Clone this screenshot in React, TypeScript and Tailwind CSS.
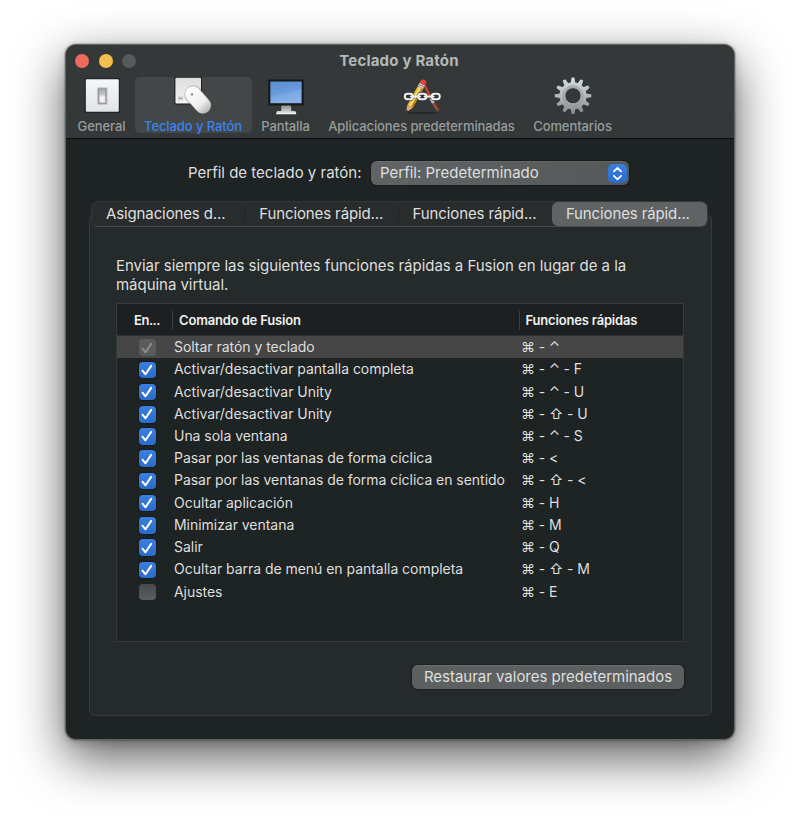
import type { ReactNode } from "react";

function GeneralIcon() {
  return (
    <svg width="40" height="40" viewBox="0 0 40 40">
      <defs>
        <linearGradient id="plate" x1="0" y1="0" x2="0" y2="1">
          <stop offset="0" stopColor="#f6f7f9" />
          <stop offset="1" stopColor="#e2e3e8" />
        </linearGradient>
        <linearGradient id="toggle" x1="0" y1="0" x2="0" y2="1">
          <stop offset="0" stopColor="#a9abb0" />
          <stop offset="0.4" stopColor="#c4c6ca" />
          <stop offset="0.6" stopColor="#f4f4f6" />
          <stop offset="1" stopColor="#e6e7ea" />
        </linearGradient>
      </defs>
      <rect x="2.8" y="1.2" width="34.8" height="34.6" rx="1" fill="#17191a" />
      <rect x="3.8" y="2.3" width="33" height="32.5" rx="0.8" fill="url(#plate)" />
      <rect x="15" y="10.3" width="10.6" height="17.6" rx="1.2" fill="#c6c8cc" />
      <rect x="16" y="11.3" width="8.6" height="15.6" fill="#96989c" />
      <rect x="17.4" y="12.3" width="5.8" height="13.4" fill="url(#toggle)" />
    </svg>
  );
}

function KeyboardMouseIcon() {
  return (
    <svg width="40" height="40" viewBox="0 0 40 40">
      <defs>
        <linearGradient id="key" x1="0" y1="0" x2="0" y2="1">
          <stop offset="0" stopColor="#dededd" />
          <stop offset="1" stopColor="#f1f1f0" />
        </linearGradient>
        <linearGradient id="mouse" x1="0" y1="0" x2="0" y2="1">
          <stop offset="0" stopColor="#ffffff" />
          <stop offset="0.65" stopColor="#efefef" />
          <stop offset="1" stopColor="#b4b4b4" />
        </linearGradient>
      </defs>
      <rect x="1.5" y="-1" width="27.4" height="28.6" rx="1" fill="#151717" />
      <rect x="2.4" y="0.8" width="25.6" height="25.8" rx="0.8" fill="url(#key)" />
      <path d="M5.5 19.3l4 4M9.5 19.3l-4 4M5.2 21.3h4.6" stroke="#9b9b9b" strokeWidth="0.8" />
      <g transform="rotate(-41 25 22.8)">
        <rect x="16.2" y="6.8" width="17.6" height="32" rx="8.8" fill="#6b6d6d" opacity="0.55" />
        <rect x="17" y="7.3" width="16" height="31" rx="8" fill="url(#mouse)" />
      </g>
      <circle cx="19" cy="17.4" r="1.1" fill="#6f7173" />
    </svg>
  );
}

function DisplayIcon() {
  return (
    <svg width="40" height="40" viewBox="0 0 40 40">
      <defs>
        <linearGradient id="screen" x1="0" y1="0" x2="0.3" y2="1">
          <stop offset="0" stopColor="#5b90d5" />
          <stop offset="1" stopColor="#88b2e8" />
        </linearGradient>
        <linearGradient id="stand" x1="0" y1="0" x2="0" y2="1">
          <stop offset="0" stopColor="#8b8d8e" />
          <stop offset="1" stopColor="#e8e8e8" />
        </linearGradient>
      </defs>
      <path d="M15.6 28h9.2l.6 6h4l1 3.2H10.1l1-3.2h4z" fill="url(#stand)" />
      <path d="M10.4 36.4h19.4" stroke="#f3f3f3" strokeWidth="1.2" />
      <rect x="2.3" y="2.6" width="35.4" height="26" rx="1.2" fill="#16191b" />
      <rect x="4.4" y="4.6" width="31.2" height="21.6" fill="url(#screen)" />
      <path d="M4.4 4.6h31.2v7L4.4 20z" fill="#4f83ca" opacity="0.25" />
    </svg>
  );
}

function DefaultAppsIcon() {
  return (
    <svg width="40" height="40" viewBox="0 0 40 40">
      <ellipse cx="20.5" cy="36" rx="17" ry="1" fill="#242828" />
      <path d="M21 8.5l2.6 -1 6.4 13 -2.6 1.4z" fill="#a93524" />
      <path d="M22.8 8l6.5 13.3" stroke="#e2573b" strokeWidth="0.9" />
      <path d="M27.4 22l2.8 -1.4 2.6 5 -2.6 1.5z" fill="#b9bcbd" />
      <path d="M29.9 27l3.1 -1.7 3.9 6.4q.5 3.2 -1.7 2.7z" fill="#8a3f26" />
      <path d="M31.4 27.4l4 5.6" stroke="#c46b49" strokeWidth="0.8" />
      <path d="M15.7 9.2l5.3 2.8 -10.3 18.7 -5.2 -2.9z" fill="#f0bd35" />
      <path d="M17.3 10l2 1 -10.3 18.7 -1.8 -1z" fill="#fbe17a" />
      <path d="M19.2 11l1.8 1 -10.3 18.7 -1.8 -1z" fill="#c88518" />
      <path d="M5.5 27.8l5.2 2.9 -6.9 5.1z" fill="#ddb07a" />
      <path d="M4.6 32.8l1.7 1.1 -2.5 1.9z" fill="#29211b" />
      <path d="M17.6 5.8l5.3 2.8 -1.8 3.3 -5.3 -2.8z" fill="#c9cccd" />
      <path d="M16.8 7.4l5.2 2.8" stroke="#717577" strokeWidth="0.8" />
      <path d="M17.6 5.8l1.4 -2.6q3.6 -2.2 5.5 1.6l-1.5 3.8z" fill="#ee4236" />
      <g fill="none" stroke="#2a2d2e" strokeWidth="3.4">
        <rect x="2.8" y="16.8" width="8.2" height="5.4" rx="2.7" />
        <rect x="16.1" y="16.8" width="8.4" height="5.4" rx="2.7" />
        <rect x="29.6" y="16.8" width="8.2" height="5.4" rx="2.7" />
      </g>
      <g fill="none" stroke="#f1f2f2" strokeWidth="2">
        <rect x="2.8" y="16.8" width="8.2" height="5.4" rx="2.7" />
        <rect x="16.1" y="16.8" width="8.4" height="5.4" rx="2.7" />
        <rect x="29.6" y="16.8" width="8.2" height="5.4" rx="2.7" />
        <path d="M9 19.5h9M22.6 19.5h9" strokeLinecap="round" />
      </g>
    </svg>
  );
}

const TEETH = [0, 30, 60, 90, 120, 150, 180, 210, 240, 270, 300, 330];

function GearIcon() {
  return (
    <svg width="40" height="40" viewBox="0 0 40 40">
      <defs>
        <linearGradient id="gear" gradientUnits="userSpaceOnUse" x1="0" y1="1" x2="0" y2="37">
          <stop offset="0" stopColor="#d3dde1" />
          <stop offset="0.5" stopColor="#b3b9bb" />
          <stop offset="1" stopColor="#87898a" />
        </linearGradient>
        <mask id="gearShape">
          <g fill="#fff">
            <circle cx="20" cy="18.8" r="13.6" />
            {TEETH.map((a) => (
              <path key={a} d="M17.6 6.5L18.5 0.9q.1-.4.5-.4h2q.4 0 .5.4L22.4 6.5z" transform={`rotate(${a} 20 18.8)`} />
            ))}
          </g>
          <circle cx="20" cy="18.8" r="7.8" fill="#000" />
        </mask>
      </defs>
      <rect width="40" height="40" fill="url(#gear)" mask="url(#gearShape)" />
      <circle cx="20" cy="18.8" r="10" fill="none" stroke="#8f9597" strokeWidth="0.8" />
      <circle cx="20" cy="18.8" r="8.5" fill="none" stroke="#a3a8aa" strokeWidth="1.4" />
    </svg>
  );
}

function ToolbarItem({ label, width, selected = false, children }: { label: string; width: string; selected?: boolean; children: ReactNode }) {
  return (
    <div className={`flex h-14 shrink-0 flex-col items-center rounded-[5px] ${width} ${selected ? "bg-[#434747] text-[#3b83f0]" : "text-[#999c9c]"}`}>
      {children}
      <span className="mt-[3px] text-[13px] leading-3 font-medium tracking-[-0.09px] whitespace-nowrap">{label}</span>
    </div>
  );
}

type CheckState = "on" | "off" | "disabled";

function Checkbox({ state }: { state: CheckState }) {
  const look =
    state === "on"
      ? "bg-linear-to-b from-[#3a80e0] to-[#2a6bcb] shadow-[0_0_1px_1px_rgba(0,0,0,0.25)]"
      : state === "off"
        ? "bg-linear-to-b from-[#474a4a] to-[#5b5e5e]"
        : "bg-[#5a5b5b]";
  return (
    <span className={`flex size-[16.5px] items-center justify-center rounded-[4px] ${look}`}>
      {state !== "off" && (
        <svg width="16" height="16" viewBox="0 0 16 16" fill="none" stroke={state === "on" ? "#ffffff" : "#8b8c8c"} strokeWidth="2" strokeLinecap="round" strokeLinejoin="round">
          <path d="M3.5 8.7l3 3.6 5.7-8.4" />
        </svg>
      )}
    </span>
  );
}

const rows: { state: CheckState; command: string; keys: string[] }[] = [
  { state: "disabled", command: "Soltar ratón y teclado", keys: ["⌘", "⌃"] },
  { state: "on", command: "Activar/desactivar pantalla completa", keys: ["⌘", "⌃", "F"] },
  { state: "on", command: "Activar/desactivar Unity", keys: ["⌘", "⌃", "U"] },
  { state: "on", command: "Activar/desactivar Unity", keys: ["⌘", "⇧", "U"] },
  { state: "on", command: "Una sola ventana", keys: ["⌘", "⌃", "S"] },
  { state: "on", command: "Pasar por las ventanas de forma cíclica", keys: ["⌘", "<"] },
  { state: "on", command: "Pasar por las ventanas de forma cíclica en sentido", keys: ["⌘", "⇧", "<"] },
  { state: "on", command: "Ocultar aplicación", keys: ["⌘", "H"] },
  { state: "on", command: "Minimizar ventana", keys: ["⌘", "M"] },
  { state: "on", command: "Salir", keys: ["⌘", "Q"] },
  { state: "on", command: "Ocultar barra de menú en pantalla completa", keys: ["⌘", "⇧", "M"] },
  { state: "off", command: "Ajustes", keys: ["⌘", "E"] },
];

const tabs = ["Asignaciones d...", "Funciones rápid...", "Funciones rápid...", "Funciones rápid..."];

export default function App() {
  return (
    <div className="h-[826px] w-[800px] overflow-hidden bg-white pt-11 pl-[65px] font-['Inter','Liberation_Sans',sans-serif] text-[#dedfdf]">
      <div className="flex h-[696px] w-[670px] flex-col overflow-hidden rounded-[11px] border border-[#626666] bg-[#1e2323] shadow-[0_18px_50px_rgba(0,0,0,0.64),0_3px_10px_rgba(0,0,0,0.18),0_0_1px_1px_rgba(0,0,0,0.18)]">
        <header className="h-[94px] shrink-0 border-b border-[#0c0f0f] bg-[#343838]">
          <div className="grid h-8 grid-cols-[1fr_auto_1fr] items-center pr-0.5">
            <div className="flex gap-[9.5px] pl-[9px]">
              <span className="size-3.5 rounded-full bg-[#ed6a5f]" />
              <span className="size-3.5 rounded-full bg-[#f5bf50]" />
              <span className="size-3.5 rounded-full bg-[#565a5a]" />
            </div>
            <h1 className="text-[15px] leading-[30px] font-bold tracking-[0.2px] text-[#b5b8b8]">Teclado y Ratón</h1>
          </div>
          <nav className="flex pl-[2.5px]">
            <ToolbarItem label="General" width="w-[66px]"><GeneralIcon /></ToolbarItem>
            <ToolbarItem label="Teclado y Ratón" width="w-[117px]" selected><KeyboardMouseIcon /></ToolbarItem>
            <ToolbarItem label="Pantalla" width="w-[68px]"><DisplayIcon /></ToolbarItem>
            <ToolbarItem label="Aplicaciones predeterminadas" width="w-[204px]"><DefaultAppsIcon /></ToolbarItem>
            <ToolbarItem label="Comentarios" width="w-[98px]"><GearIcon /></ToolbarItem>
          </nav>
        </header>

        <main className="flex flex-col px-[23px] pt-[22px] text-[15px]">
          <div className="flex h-6 items-center pl-[99px]">
            <span className="w-[183px] leading-6">Perfil de teclado y ratón:</span>
            <div className="flex h-6 w-[258px] items-center justify-between rounded-md bg-linear-to-r from-[#616464] to-[#555858] pr-0.5 pl-[9px] shadow-[0_0_1px_1px_rgba(0,0,0,0.25),inset_0_1px_0_rgba(255,255,255,0.08)]">
              <span className="leading-6">Perfil: Predeterminado</span>
              <span className="flex size-[19px] items-center justify-center rounded-[5px] bg-linear-to-b from-[#3a80e0] to-[#2a6bcb]">
                <svg width="19" height="19" viewBox="0 0 19 19" fill="none" stroke="#fff" strokeWidth="1.8" strokeLinecap="round" strokeLinejoin="round">
                  <path d="M5.9 7.4l3.6-3.5 3.6 3.5M5.9 11.8l3.6 3.5 3.6-3.5" />
                </svg>
              </span>
            </div>
          </div>

          <section className="mt-[29px] flex h-[502px] w-[622.5px] flex-col rounded-md border border-[#373b3b] bg-[#252a2a]">
            <div className="relative -mt-3.5 ml-px flex h-[26px] w-[617px] shrink-0 rounded-[7px] border border-[#343838] border-b-[#474b4b] bg-[#282c2c]">
              {tabs.map((t, i) => (
                <div
                  key={i}
                  className={`h-6 pl-[14px] leading-[23px] tracking-[-0.12px] ${i === 3 ? "w-[155px] rounded-[6px] bg-[#5f6363] pl-[13.5px]" : "flex w-[153.3px] items-center justify-between"}`}
                >
                  <span className="block h-6">{t}</span>
                  {i < 2 && <span className="h-3.5 w-px bg-[#1e2222]" />}
                </div>
              ))}
            </div>

            <p className="mt-[29px] ml-[26px] w-[540px] leading-[19px] tracking-[-0.035px]">
              Enviar siempre las siguientes funciones rápidas a Fusion en lugar de a la
              <br />
              máquina virtual.
            </p>

            <div className="mt-[9px] ml-[26px] flex h-[339px] w-[568px] flex-col border border-[#373a3a] bg-[#1e2323]">
              <div className="flex h-8 shrink-0 items-center border-b border-[#2c3030] bg-[#1c2020] pt-0.5 text-[13px] font-semibold text-[#f0f0f0]">
                <span className="w-[55px] pl-[17px] tracking-[-0.45px]">En...</span>
                <span className="h-[19px] w-px bg-[#3c4040]" />
                <span className="w-[346px] pl-[6px] tracking-[-0.16px]">Comando de Fusion</span>
                <span className="h-[19px] w-px bg-[#3c4040]" />
                <span className="pl-[5.5px] tracking-[-0.18px]">Funciones rápidas</span>
              </div>
              <ul className="text-sm">
                {rows.map((r, i) => (
                  <li key={i} className={`flex h-[22.23px] items-center ${i === 0 ? "bg-[#464646]" : ""}`}>
                    <span className="w-[57px] pt-px pl-[22px]"><Checkbox state={r.state} /></span>
                    <span className="w-[347px] leading-[22px] tracking-[-0.035px] whitespace-nowrap">{r.command}</span>
                    <span className="leading-[22px] tracking-[-0.1px] whitespace-nowrap">{r.keys.join(" - ")}</span>
                  </li>
                ))}
              </ul>
            </div>

            <button className="mt-[23px] ml-[322px] h-6 w-[272px] shrink-0 rounded-[6px] bg-[#5c6060] leading-6 tracking-[-0.02px] shadow-[0_0_1px_1px_rgba(0,0,0,0.25),inset_0_1px_0_rgba(255,255,255,0.1)]">
              Restaurar valores predeterminados
            </button>
          </section>
        </main>
      </div>
    </div>
  );
}
